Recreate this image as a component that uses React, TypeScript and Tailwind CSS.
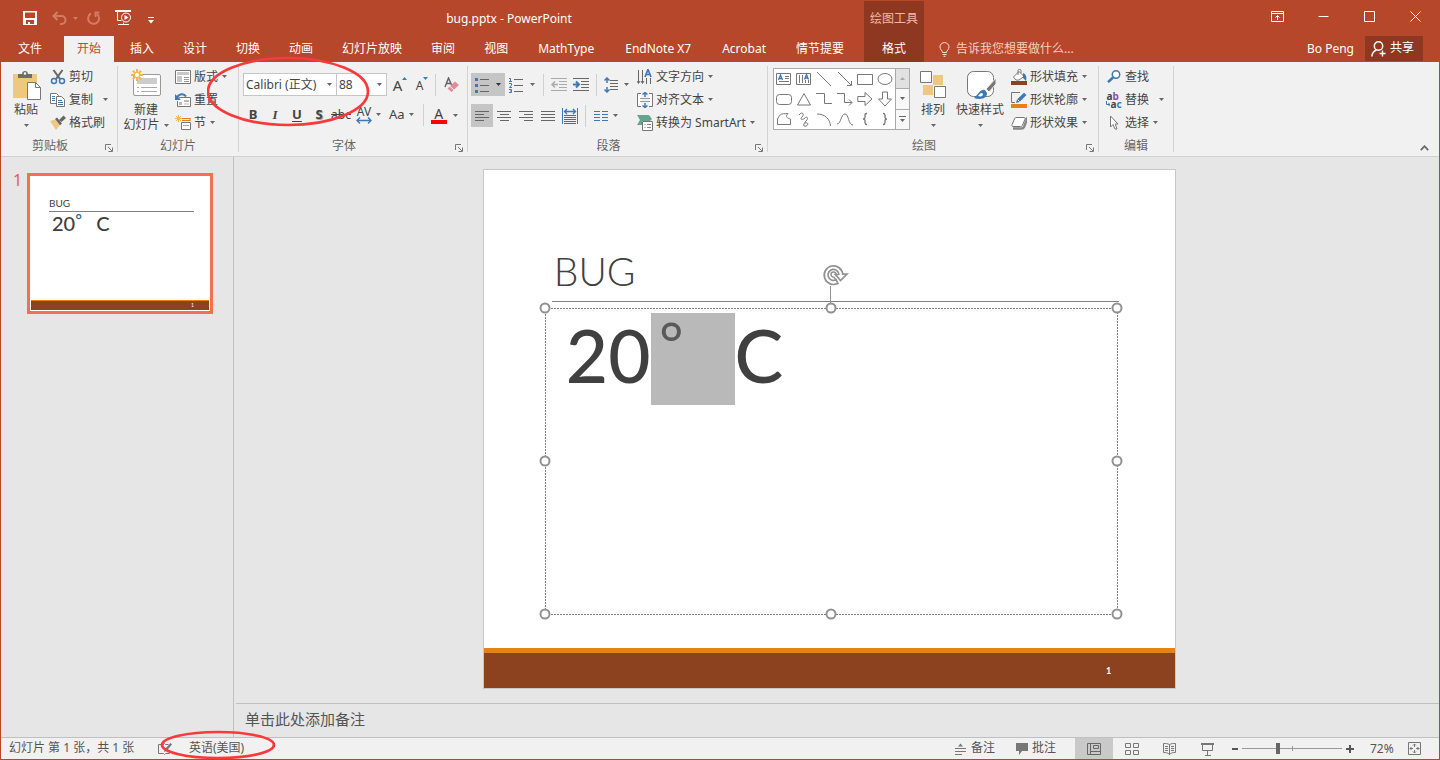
import React from "react";
import clsx from "clsx";

type IconProps = {
  w?: number;
  h?: number;
  className?: string;
  children: React.ReactNode;
};

function Icon({ w = 16, h = 16, className, children }: IconProps) {
  return (
    <svg
      width={w}
      height={h}
      viewBox={`0 0 ${w} ${h}`}
      fill="none"
      stroke="#777"
      strokeWidth={1}
      className={clsx("shrink-0", className)}
      aria-hidden="true"
    >
      {children}
    </svg>
  );
}

function Caret({ className = "text-[#666]" }: { className?: string }) {
  return (
    <svg width="5" height="3" viewBox="0 0 5 3" className={clsx("shrink-0", className)} aria-hidden="true">
      <path d="M0 0h5L2.500 3z" fill="currentColor" />
    </svg>
  );
}

/* ---------- title bar ---------- */

function QuickAccess() {
  return (
    <div className="flex items-center pl-[22px]">
      <button aria-label="保存" className="w-[30px]">
        <Icon w={16} h={16}>
          <path d="M1 1h14v14H1z" fill="#fff" stroke="none" />
          <path d="M3 2.500h10V8H3zM4 10h8v4H4z" fill="#b7472a" stroke="none" />
          <path d="M6 12h2v3H6z" fill="#fff" stroke="none" />
        </Icon>
      </button>
      <button aria-label="撤消" className="flex w-[34px] items-center gap-[6px] text-[#cf7d67]">
        <Icon w={15} h={14}>
          <path d="M5.500 1 1.500 5l4 4M2 5h7.500a4 4 0 0 1 0 8H8" stroke="#cf7d67" strokeWidth={2} />
        </Icon>
        <Caret className="text-[#cf7d67]" />
      </button>
      <button aria-label="恢复" className="w-[29px]">
        <Icon w={15} h={15}>
          <path d="M5 2.500a5.500 5.500 0 1 0 6 .5M13.500 1.500H9.500V6" stroke="#cf7d67" strokeWidth={2} />
        </Icon>
      </button>
      <button aria-label="从头开始" className="w-[33px]">
        <Icon w={18} h={16}>
          <path d="M2.500 2v8.500h4M3 14.500h11M8.500 12.500v2" stroke="#fff" />
          <path d="M0 1h16" stroke="#fff" strokeWidth={2} />
          <circle cx="11" cy="7.500" r="4.500" fill="#b7472a" stroke="#fff" />
          <path d="M9.500 5v5l4-2.500z" fill="#fff" stroke="none" />
        </Icon>
      </button>
      <button aria-label="自定义快速访问工具栏" className="pt-1">
        <Icon w={6} h={7}>
          <path d="M0 .5h6" stroke="#fff" />
          <path d="M0 3h6L3 6.500z" fill="#fff" stroke="none" />
        </Icon>
      </button>
    </div>
  );
}

const tabs = [
  { name: "插入" },
  { name: "设计" },
  { name: "切换" },
  { name: "动画" },
  { name: "幻灯片放映" },
  { name: "审阅" },
  { name: "视图" },
  { name: "MathType", addin: true },
  { name: "EndNote X7", addin: true },
  { name: "Acrobat", addin: true },
  { name: "情节提要" },
];

function WindowButton({ label, children }: { label: string; children: React.ReactNode }) {
  return (
    <button aria-label={label} className="flex h-full w-[46px] items-center justify-center">
      <Icon w={13} h={11}>
        <g stroke="#fff">{children}</g>
      </Icon>
    </button>
  );
}

function Header() {
  return (
    <header className="flex h-[62px] shrink-0 bg-[#b7472a] text-xs text-white">
      <div className="flex shrink-0 basis-3/5 flex-col">
        <div className="flex h-9 items-center">
          <QuickAccess />
          <h1 className="flex-1 pt-[2px] text-center">bug.pptx - PowerPoint</h1>
        </div>
        <nav className="flex flex-1 gap-[3px] whitespace-nowrap pl-[5px]">
          <button className="mr-[6px] px-[13px]">文件</button>
          <button className="bg-[#f1f1f1] px-[13px] text-[#c8472a]">开始</button>
          {tabs.map((tab) => (
            <button key={tab.name} className={tab.addin ? "px-[14px]" : "px-[13px]"}>
              {tab.name}
            </button>
          ))}
        </nav>
      </div>
      <div className="mt-px flex w-[60px] shrink-0 flex-col bg-[#8f3821]">
        <div className="flex h-[35px] items-center justify-center text-[#f2b8a4]">绘图工具</div>
        <button className="flex-1">格式</button>
      </div>
      <div className="flex min-w-0 flex-1 flex-col">
        <div className="flex h-[33px] justify-end pr-[2px]">
          <WindowButton label="功能区显示选项">
            <path d="M.5.5h12v10H.5zM.5 2.500h12M6.500 9V4.500M4.500 6.500l2-2 2 2" />
          </WindowButton>
          <WindowButton label="最小化">
            <path d="M1.500 5.500h10" />
          </WindowButton>
          <WindowButton label="最大化">
            <path d="M1.500.5h10v10h-10z" />
          </WindowButton>
          <WindowButton label="关闭">
            <path d="m1.500.5 10 10M11.500.5l-10 10" />
          </WindowButton>
        </div>
        <div className="mt-[3px] flex flex-1 items-center pl-[15px] pr-[17px]">
          <Icon w={11} h={15}>
            <path
              d="M3.500 10.500C3.500 8.500 1 7.500 1 4.900a4.500 4.300 0 0 1 9 0c0 2.600-2.500 3.600-2.500 5.600zM3.500 12.500h4M4.500 14.300h2"
              stroke="#fbe0d8"
            />
          </Icon>
          <input
            aria-label="告诉我您想要做什么"
            placeholder="告诉我您想要做什么..."
            className="ml-[6px] w-36 min-w-0 bg-transparent text-xs outline-none placeholder:text-[#f3cfc5]"
          />
          <span className="ml-auto mr-[11px] whitespace-nowrap">Bo Peng</span>
          <button className="mb-px flex h-[25px] w-[58px] shrink-0 items-center gap-1 bg-[#8f3821] pb-[2px] pl-[6px]">
            <Icon w={15} h={16} className="mt-[2px]">
              <g stroke="#fff" strokeWidth={1.400}>
                <circle cx="7.500" cy="5" r="4.200" />
                <path d="M.8 15.500c.3-3.500 2-5.500 4.700-6.500M8.500 12.500h6M11.500 9.500v6" />
              </g>
            </Icon>
            共享
          </button>
        </div>
      </div>
    </header>
  );
}

/* ---------- ribbon parts ---------- */

function Separator() {
  return <div className="my-1 w-px shrink-0 bg-[#d4d4d4]" />;
}

function Divider() {
  return <div className="h-[22px] w-px shrink-0 bg-[#d0d0d0]" />;
}

type GroupProps = {
  label: string;
  width: string;
  launcher?: boolean;
  children: React.ReactNode;
};

function Group({ label, width, launcher, children }: GroupProps) {
  return (
    <>
      <section aria-label={label} className={clsx("relative flex shrink-0 flex-col", width)}>
        <div className="flex h-[72px] pt-[3px]">{children}</div>
        <div className="flex h-[22px] items-center pt-[2px]">
          <span className="flex-1 text-center text-[#666]">{label}</span>
          {launcher && (
            <button aria-label={`${label}设置`} className="w-[18px] pl-[6px] pt-1">
              <Icon w={8} h={8}>
                <path d="M.5 6V.5H6M3 3l4 4M7.500 3.500v4h-4" />
              </Icon>
            </button>
          )}
        </div>
      </section>
      <Separator />
    </>
  );
}

type RowButtonProps = {
  icon: React.ReactNode;
  text: string;
  caret?: boolean;
  wide?: boolean;
};

function RowButton({ icon, text, caret, wide }: RowButtonProps) {
  return (
    <button className="flex h-[23px] items-center whitespace-nowrap">
      <span className="mr-[3px] flex w-4 justify-center">{icon}</span>
      {text}
      {caret && (
        <span className={wide ? "ml-[10px]" : "ml-1"}>
          <Caret />
        </span>
      )}
    </button>
  );
}

function TallButton({ icon, lines, className }: { icon: React.ReactNode; lines: string[]; className?: string }) {
  return (
    <button className={clsx("flex flex-col items-center whitespace-nowrap pt-1", className)}>
      <span className="flex h-8 items-center">{icon}</span>
      <span className="mt-px h-4 leading-4">{lines[0]}</span>
      <span className="flex h-[14px] items-center gap-1 leading-4">
        {lines[1]}
        <Caret />
      </span>
    </button>
  );
}

function ClipboardGroup() {
  return (
    <Group label="剪贴板" width="w-[116px]" launcher>
      <TallButton
        className="ml-[5px] w-10"
        lines={["粘贴"]}
        icon={
          <Icon w={29} h={31} className="ml-[3px]">
            <path d="M0 4h24v24H0z" fill="#edc87e" stroke="none" />
            <path d="M5 8V4h4c0-4 6-4 6 0h4v4z" fill="#6d6d6d" stroke="none" />
            <circle cx="12" cy="3.500" r="1.200" fill="#fff" stroke="none" />
            <path d="M14.500 12.500h8l5 5v12h-13z" fill="#fff" />
            <path d="M22.500 12.500v5h5" />
          </Icon>
        }
      />
      <div className="ml-1 flex flex-col">
        <RowButton
          text="剪切"
          icon={
            <Icon>
              <path d="M3.500 1 10 10M12.500 1 6 10" stroke="#666" strokeWidth={2} />
              <circle cx="4" cy="12" r="2.500" stroke="#3f78b5" strokeWidth={1.500} />
              <circle cx="12" cy="12" r="2.500" stroke="#3f78b5" strokeWidth={1.500} />
            </Icon>
          }
        />
        <RowButton
          text="复制"
          caret
          wide
          icon={
            <Icon>
              <path d="M.5 1.500h6l2 2v8h-8z" fill="#fff" />
              <path d="M6.500 4.500h5l3 3v7h-8z" fill="#fff" />
              <path d="M2 4.500h3M2 6.500h3M2 8.500h3M8 8.500h4M8 10.500h5M8 12.500h5" stroke="#3f78b5" />
            </Icon>
          }
        />
        <RowButton
          text="格式刷"
          icon={
            <Icon>
              <path d="m0 6 5-1.500L10 10l-4 5z" fill="#edc87e" stroke="none" />
              <path d="m5 4 2-1.500 5 6-2 1.800zM9 5l4.500-4.500L16 3l-4.500 4z" fill="#666" stroke="none" />
            </Icon>
          }
        />
      </div>
    </Group>
  );
}

function SlidesGroup() {
  return (
    <Group label="幻灯片" width="w-[120px]">
      <TallButton
        className="ml-[3px] w-[50px]"
        lines={["新建", "幻灯片"]}
        icon={
          <Icon w={32} h={30} className="-mt-1">
            <rect x="3.500" y="6.500" width="27" height="21" rx="1.500" fill="#fff" stroke="#999" />
            <path d="M7 10h20v6H7z" fill="#ccc" stroke="none" />
            <path d="M7 19.500h2M11 19.500h16M7 23.500h2M11 23.500h16" stroke="#aaa" />
            <path d="M7 1v12M1 7h12M2.800 2.800l8.400 8.400M11.200 2.800l-8.400 8.400" stroke="#eeb752" strokeWidth={2} />
            <circle cx="7" cy="7" r="2" fill="#fff" stroke="none" />
          </Icon>
        }
      />
      <div className="ml-1 flex flex-col">
        <RowButton
          text="版式"
          caret
          icon={
            <Icon>
              <path d="M.5 1.500h15v13H.5z" fill="#fff" />
              <path d="M2 3h12v3H2zM2 7h5v6H2z" fill="#c8c8c8" stroke="none" />
              <path d="M9 8.500h5M9 10.500h5M9 12.500h5" stroke="#999" />
            </Icon>
          }
        />
        <RowButton
          text="重置"
          icon={
            <Icon>
              <path d="M4 5.500h11.500v9H2.500V9" fill="#fff" />
              <path d="M9 8h5v2H9zM4 10h3v3H4zM9 11.500h5v1H9z" fill="#bbb" stroke="none" />
              <path d="M2 5.500c2-4 7-4.500 9-1" stroke="#3f78b5" strokeWidth={2} />
              <path d="M0 2v6h6z" fill="#3f78b5" stroke="none" />
            </Icon>
          }
        />
        <RowButton
          text="节"
          caret
          icon={
            <Icon>
              <path d="M6.500 7.500h9v7h-9z" fill="#fff" />
              <path d="M8 10.500h6" stroke="#aaa" />
              <path d="M7 3.500h8.500M7 5.500h8.500M15 3v3" stroke="#e0801b" />
              <path d="M3.500 0v7M0 3.500h7M1 1l5 5M6 1 1 6" stroke="#eeb752" />
            </Icon>
          }
        />
      </div>
    </Group>
  );
}

function Combo({ label, value, className }: { label: string; value: string; className: string }) {
  return (
    <div className={clsx("relative h-[23px]", className)}>
      <select
        aria-label={label}
        className="h-full w-full appearance-none rounded-none border border-[#c6c6c6] bg-white pl-[2px] text-xs outline-none"
      >
        <option>{value}</option>
      </select>
      <span className="pointer-events-none absolute inset-y-0 right-[5px] flex items-center">
        <Caret />
      </span>
    </div>
  );
}

function FontGroup() {
  const cell = "flex h-full w-[22px] items-center justify-center";
  return (
    <Group label="字体" width="w-[228px]" launcher>
      <div className="flex flex-col gap-2 pl-1 pt-2">
        <div className="flex h-[23px] items-center">
          <Combo label="字体" value="Calibri (正文)" className="w-[94px]" />
          <Combo label="字号" value="88" className="-ml-px w-[51px]" />
          <button aria-label="增大字号" className={clsx(cell, "ml-[2px]")}>
            <span className="text-[15px] leading-4">A</span>
            <svg width="5" height="3" viewBox="0 0 5 3" className="mb-[13px]">
              <path d="M0 3h5L2.500 0z" fill="#3f78b5" />
            </svg>
          </button>
          <button aria-label="减小字号" className={cell}>
            <span className="pt-[2px] text-xs leading-4">A</span>
            <Caret className="mb-[13px] text-[#3f78b5]" />
          </button>
          <span className="ml-[2px] mr-[5px]">
            <Divider />
          </span>
          <button aria-label="清除格式" className={cell}>
            <Icon w={16} h={16}>
              <path d="m1 10 3.500-9L8 9M2.500 6.500h4" stroke="#666" strokeWidth={1.500} />
              <path d="m3.500 11.500 7.500-7 4 3.500-7.500 7z" fill="#e8899a" stroke="none" />
              <path d="m5.500 9 4.500 4" stroke="#fff" />
            </Icon>
          </button>
        </div>
        <div className="-ml-px flex h-[23px] items-center pb-[2px] text-[13px]">
          <button aria-label="加粗" className={clsx(cell, "font-bold")}>
            B
          </button>
          <button aria-label="倾斜" className={clsx(cell, "font-['Liberation_Serif',serif] font-bold italic")}>
            I
          </button>
          <button aria-label="下划线" className={clsx(cell, "font-bold underline underline-offset-2")}>
            U
          </button>
          <button aria-label="文字阴影" className={clsx(cell, "font-bold [text-shadow:1px_1px_1px_#999]")}>
            S
          </button>
          <button aria-label="删除线" className={clsx(cell, "text-xs line-through")}>
            abc
          </button>
          <button aria-label="字符间距" className="ml-1 flex items-center gap-1">
            <span className="flex flex-col items-center">
              <span className="text-xs leading-[11px]">AV</span>
              <Icon w={16} h={7}>
                <path d="M1 3.500h14M4 .5l-3 3 3 3M12 .5l3 3-3 3" stroke="#3f78b5" strokeWidth={1.400} />
              </Icon>
            </span>
            <Caret />
          </button>
          <button aria-label="更改大小写" className="ml-2 mr-[9px] flex items-center gap-1">
            Aa
            <Caret />
          </button>
          <Divider />
          <button aria-label="字体颜色" className="ml-[7px] mt-[2px] flex items-center gap-[6px]">
            <span className="flex w-4 flex-col items-center border-b-4 border-[#f00]">
              <span className="text-sm leading-[13px]">A</span>
            </span>
            <Caret />
          </button>
        </div>
      </div>
      <svg
        width="164"
        height="72"
        viewBox="0 0 164 72"
        className="pointer-events-none absolute -left-8 -top-[7px] z-10"
        aria-hidden="true"
      >
        <ellipse cx="81" cy="36.500" rx="80" ry="33.500" fill="none" stroke="#fa393b" strokeWidth="2.700" />
      </svg>
    </Group>
  );
}

function Align({ d, label, active }: { d: string; label: string; active?: boolean }) {
  return (
    <button
      aria-label={label}
      className={clsx("flex h-full w-[22px] items-center justify-center", active && "bg-[#c5c5c5]")}
    >
      <Icon w={14} h={12}>
        <path d={d} stroke="#666" />
      </Icon>
    </button>
  );
}

function ParagraphGroup() {
  return (
    <Group label="段落" width="w-[299px]" launcher>
      <div className="flex w-[166px] flex-col gap-2 pl-[3px] pt-2">
        <div className="flex h-[23px] items-center">
          <button aria-label="项目符号" className="flex h-full w-[34px] items-center gap-[7px] bg-[#c5c5c5] pl-1">
            <Icon w={14} h={16}>
              <path d="M5 2.500h9M5 8.500h9M5 14.500h9" stroke="#666" />
              <path d="M0 1h3v3H0zM0 7h3v3H0zM0 13h3v3H0z" fill="#3f78b5" stroke="none" />
            </Icon>
            <Caret className="text-[#333]" />
          </button>
          <button aria-label="编号" className="ml-1 flex items-center gap-[7px]">
            <Icon w={14} h={16}>
              <path d="M5 2.500h9M5 8.500h9M5 14.500h9" stroke="#666" />
              <path d="M0 1.500h1.500v3M0 4.500h3M0 6.500h2.500v1.500L.5 10.500h2.500M0 12.500h2.500v3H0M1 14h1.500" stroke="#3f78b5" />
            </Icon>
            <Caret />
          </button>
          <span className="ml-2 mr-[7px]">
            <Divider />
          </span>
          <button aria-label="降低列表级别" className="mr-[6px]">
            <Icon w={16} h={13}>
              <path d="M0 .5h16M8 3.500h8M8 6.500h8M8 9.500h8M0 12.500h16" stroke="#aaa" />
              <path d="M7 6.500H1M4 3.500l-3 3 3 3" stroke="#aaa" strokeWidth={1.500} />
            </Icon>
          </button>
          <button aria-label="提高列表级别" className="mr-[7px]">
            <Icon w={16} h={13}>
              <path d="M0 .5h16M8 3.500h8M8 6.500h8M8 9.500h8M0 12.500h16" stroke="#666" />
              <path d="M0 6.500h6M3 3.500l3 3-3 3" stroke="#3f78b5" strokeWidth={2} />
            </Icon>
          </button>
          <Divider />
          <button aria-label="行距" className="ml-[7px] flex items-center gap-[5px]">
            <Icon w={15} h={16}>
              <path d="M6 3.500h8M6 6.500h8M6 9.500h8M6 12.500h8" stroke="#666" />
              <path d="M3 1v5M3 10v5M.5 3.500 3 1l2.500 2.500M.5 12.500 3 15l2.500-2.500" stroke="#3f78b5" strokeWidth={1.500} />
            </Icon>
            <Caret />
          </button>
        </div>
        <div className="flex h-[23px] items-center">
          <Align label="左对齐" active d="M0 1.500h14M0 4.500h9M0 7.500h14M0 10.500h9" />
          <Align label="居中" d="M0 1.500h14M3 4.500h9M0 7.500h14M3 10.500h9" />
          <Align label="右对齐" d="M0 1.500h14M5 4.500h9M0 7.500h14M5 10.500h9" />
          <Align label="两端对齐" d="M0 1.500h14M0 4.500h14M0 7.500h14M0 10.500h14" />
          <button aria-label="分散对齐" className="flex w-[22px] justify-center">
            <Icon w={16} h={16}>
              <path d="M.5 0v16M15.500 0v16" stroke="#3f78b5" />
              <path d="M2.500 3.500h11M5 1 2.500 3.500 5 6M11 1l2.500 2.500L11 6" stroke="#3f78b5" strokeWidth={1.400} />
              <path d="M2 7.500h12M2 9.500h12M2 11.500h12M2 13.500h12M2 15.500h12" stroke="#666" />
            </Icon>
          </button>
          <span className="ml-1 mr-2">
            <Divider />
          </span>
          <button aria-label="分栏" className="flex items-center gap-[5px]">
            <Icon w={14} h={11}>
              <path d="M0 1.500h6M8 1.500h6M0 4.500h6M8 4.500h6M0 7.500h6M8 7.500h6M0 10.500h6M8 10.500h6" stroke="#3f78b5" />
            </Icon>
            <Caret />
          </button>
        </div>
      </div>
      <div className="ml-[3px] flex flex-col">
        <RowButton
          text="文字方向"
          caret
          icon={
            <Icon>
              <path d="M1.500 1v13M5.500 1v13M9.500 9v6M13.500 9v6M0 12l1.500 2.500L3 12M4 12l1.500 2.500L7 12" stroke="#666" />
              <path d="m8 8 3-7.500L14 8M9 5.500h4" stroke="#3f78b5" strokeWidth={1.700} />
            </Icon>
          }
        />
        <RowButton
          text="对齐文本"
          caret
          icon={
            <Icon>
              <path d="M4 1.500H.5v13H4M12 1.500h3.500v13H12" fill="#fff" />
              <path d="M3 6.500h10M3 9.500h10" stroke="#999" />
              <path d="M8 0v5M5.500 2.500 8 .5l2.500 2M8 16v-5M5.500 13.500 8 15.500l2.500-2" stroke="#3f78b5" strokeWidth={1.500} />
            </Icon>
          }
        />
        <RowButton
          text="转换为 SmartArt"
          caret
          icon={
            <Icon>
              <path d="M0 0h12l3 4-2 2H5v4H0l3-5z" fill="#66a48f" stroke="none" />
              <path d="M5.500 6.500h10v9h-10z" fill="#fff" />
              <path d="M7.500 9.500h1M10 9.500h4M7.500 12.500h1M10 12.500h4" stroke="#888" />
            </Icon>
          }
        />
      </div>
    </Group>
  );
}

const shapes: React.ReactNode[] = [
  <>
    <path d="M.5 2.500h14v11H.5zM9 5.500h4M9 7.500h4M3 10.500h10" />
    <path d="m2.500 9 2-5 2 5M3 7.500h3" stroke="#3f78b5" strokeWidth={1.300} />
  </>,
  <>
    <path d="M.5 2.500h14v11H.5zM3.500 4v8M6.500 4v8M9.500 9v3M12.500 9v3" />
    <path d="m8.500 8.500 2-5 2 5M9 7h3" stroke="#3f78b5" strokeWidth={1.300} />
  </>,
  <path d="m1 1 14 14" />,
  <path d="m1 1 13 13M14.500 10v4.500H10" />,
  <path d="M.5 3.500h15v10H.5z" />,
  <ellipse cx="8" cy="8" rx="7" ry="5.500" />,
  <rect x=".5" y="3.500" width="15" height="10" rx="3" />,
  <path d="M8 2.500 14.500 14h-13z" />,
  <path d="M0 2.500h8.500v10H16" />,
  <path d="M0 2.500h7.500v9H15M12 8.500l3 3-3 3" />,
  <path d="M.8 5.500H8v-4l7 6.500-7 6.500v-4H.8z" />,
  <path d="M5.500 1v7h-4L8 15l6.500-7h-4V1z" />,
  <path d="M3.500 4.500C6 2 9 3 12 2.500c-3 3.500-1 4.500 2.500 5.500v5.500H1.500V8z" />,
  <path d="M3 4c3-4 6-1 3 2s1 3 3 1 4 0 1 3-3 6 0 5 2-4-1-3" />,
  <path d="M1 3c8 0 13 5 13.500 12" />,
  <path d="M0 13c4 0 4-10 8-10s3 11 8 11" />,
  <path d="M10 2.500H9.500C8 2.500 8 3.500 8 4.500v2C8 7.500 7.500 8 6 8c1.500 0 2 .5 2 1.500v2c0 1 0 2 1.500 2h.5" strokeWidth={1.300} />,
  <path d="M6 2.500h.5C8 2.500 8 3.500 8 4.500v2C8 7.500 8.500 8 10 8c-1.500 0-2 .5-2 1.500v2c0 1 0 2-1.500 2H6" strokeWidth={1.300} />,
];

function DrawingGroup() {
  return (
    <Group label="绘图" width="w-[330px]" launcher>
      <div className="ml-[5px] mt-[3px] flex h-[62px] w-[137px] border border-[#ababab] bg-white">
        <div className="grid flex-1 grid-cols-6 content-start">
          {shapes.map((shape, i) => (
            <button key={i} aria-label={`形状 ${i + 1}`} className="flex h-5 items-center justify-center">
              <Icon>{shape}</Icon>
            </button>
          ))}
        </div>
        <div className="flex w-[14px] flex-col divide-y divide-[#ababab] border-l border-[#ababab] bg-[#f8f8f8]">
          <button aria-label="上一行" className="flex flex-1 items-center justify-center bg-[#e1e1e1]">
            <Caret className="rotate-180 text-[#aaa]" />
          </button>
          <button aria-label="下一行" className="flex flex-1 items-center justify-center">
            <Caret />
          </button>
          <button aria-label="其他" className="flex flex-1 flex-col items-center justify-center gap-[2px]">
            <span className="h-px w-[7px] bg-[#666]" />
            <Caret />
          </button>
        </div>
      </div>
      <TallButton
        className="ml-1 w-[38px]"
        lines={["排列"]}
        icon={
          <Icon w={28} h={28}>
            <path d="M14 4h10v10H14zM4 14h10v10H4z" fill="#edc87e" stroke="none" />
            <path d="M1.500.5h11v11h-11zM15.500 15.500h11v11h-11z" fill="#fff" />
          </Icon>
        }
      />
      <TallButton
        className="ml-[2px] w-[52px]"
        lines={["快速样式"]}
        icon={
          <Icon w={30} h={30} className="ml-1">
            <rect x=".5" y="1.500" width="26" height="25" rx="6" fill="#fff" />
            <path d="M29 8v6l-7 8-3-3z" fill="#777" stroke="#f1f1f1" />
            <path d="M18 20c-5-1-6 4-11 8 6 2 13 1 13-5z" fill="#3f78b5" stroke="none" />
            <path d="M15 23c-2 0-3 2-4 3 3 1 5 0 5-2z" fill="#fff" stroke="none" />
          </Icon>
        }
      />
      <div className="ml-[5px] flex flex-col">
        <RowButton
          text="形状填充"
          caret
          icon={
            <Icon>
              <path d="M0 12h16v4H0z" fill="#8c411f" stroke="none" />
              <path d="M2.500 8 8 2.500l5 5L8 11H5z" fill="#fff" />
              <path d="M7 6V1.500c0-1.500 3-1.500 3 0V4" />
              <path d="M12 4c3 1 4 4 3 8l-3-3z" fill="#3f78b5" stroke="none" />
            </Icon>
          }
        />
        <RowButton
          text="形状轮廓"
          caret
          icon={
            <Icon>
              <path d="M0 12h16v4H0z" fill="#e48312" stroke="none" />
              <path d="M9 .5H.5v10H4" />
              <path d="M5 11 6 7.500 13 .8 15.500 3 8.500 10z" fill="#3f78b5" stroke="none" />
              <path d="m6.500 7.500 2 2" stroke="#fff" />
            </Icon>
          }
        />
        <RowButton
          text="形状效果"
          caret
          icon={
            <Icon>
              <path d="M2 13.500h8.500c1.500 0 2-.5 2.500-1.500l2.500-6.500c.5-1.500 0-2-1-2.500" stroke="#888" strokeWidth={2.500} />
              <path d="M5 2.500h8c1 0 1.300 1 1 1.700L11.500 10c-.4 1-1 1.500-2 1.500H2c-1 0-1.300-1-1-2l2.500-5.500c.3-1 .8-1.500 1.500-1.500z" fill="#fff" />
            </Icon>
          }
        />
      </div>
    </Group>
  );
}

function EditingGroup() {
  return (
    <Group label="编辑" width="w-[74px]">
      <div className="ml-[7px] flex flex-col">
        <RowButton
          text="查找"
          icon={
            <Icon w={14} h={13}>
              <circle cx="9" cy="4.500" r="3.700" fill="#fff" stroke="#3f78b5" strokeWidth={1.500} />
              <path d="m6 7.500-5 4.700" stroke="#3f78b5" strokeWidth={2.500} />
            </Icon>
          }
        />
        <RowButton
          text="替换"
          caret
          wide
          icon={
            <span className="flex flex-col text-left text-[10px] font-bold leading-[8px]">
              <span>
                a<span className="text-[#8d4fb5]">b</span>
              </span>
              <span className="flex items-center">
                <Icon w={4} h={6}>
                  <path d="M.5 0v3.500H4M2.500 2 4 3.500 2.500 5" stroke="#3f78b5" />
                </Icon>
                a<span className="text-[#3f78b5]">c</span>
              </span>
            </span>
          }
        />
        <RowButton
          text="选择"
          caret
          icon={
            <Icon w={10} h={15}>
              <path d="M1.500 1v11l2.500-2.500 2 4.500h2L6.200 9H9z" fill="#fff" />
            </Icon>
          }
        />
      </div>
    </Group>
  );
}

function Ribbon() {
  return (
    <div className="flex shrink-0 border-b border-[#d2d2d2] bg-[#f1f1f1] text-xs text-[#444]">
      <ClipboardGroup />
      <SlidesGroup />
      <FontGroup />
      <ParagraphGroup />
      <DrawingGroup />
      <EditingGroup />
      <button aria-label="折叠功能区" className="mb-[5px] ml-auto mr-[10px] self-end">
        <Icon w={9} h={6}>
          <path d="m.8 5.200 3.700-4 3.700 4" stroke="#666" strokeWidth={1.700} />
        </Icon>
      </button>
    </div>
  );
}

/* ---------- workspace ---------- */

function Thumbnails() {
  return (
    <aside className="flex w-[233px] shrink-0 items-start border-r border-[#c0c0c0] pl-3 pt-4">
      <span className="w-[14px] text-base leading-[14px] text-[#dd6547]">1</span>
      <button
        aria-label="幻灯片 1"
        className="flex h-[141px] w-[186px] flex-col border-[3px] border-[#f2714f] bg-white p-px text-left font-['Lato',sans-serif] text-[#404040]"
      >
        <span className="ml-[18px] mr-[15px] mt-[18px] block border-b border-[#808080] text-[10px] leading-4">
          BUG
        </span>
        <span className="ml-[21px] flex flex-1 text-xl font-medium leading-[22px]">
          20
          <span className="w-[21px] font-['Noto_Sans',sans-serif] text-base leading-4 text-[#2f6090]">°</span>
          C
        </span>
        <span className="flex h-[10px] items-center justify-end border-t border-[#e48312] bg-[#8c411f] pr-[15px] text-[5px] text-white">
          1
        </span>
      </button>
    </aside>
  );
}

const handles = [
  "left-0 top-0",
  "left-1/2 top-0",
  "left-full top-0",
  "left-0 top-1/2",
  "left-full top-1/2",
  "left-0 top-full",
  "left-1/2 top-full",
  "left-full top-full",
];

function Slide() {
  return (
    <article className="flex aspect-[4/3] h-full flex-col border border-[#c8c8c8] bg-white font-['Lato',sans-serif] text-[#404040]">
      <div className="flex min-h-0 flex-1 flex-col pb-[34px] pl-[61px] pr-[58px]">
        <h2 className="-mr-[2px] ml-[7px] border-b border-[#808080] pb-[5px] pl-[2px] pt-[77px] text-[39px] font-light leading-[49px]">
          BUG
        </h2>
        <div className="relative mt-[6px] flex-1">
          <svg className="absolute inset-0 size-full overflow-visible" aria-hidden="true">
            <rect
              width="100%"
              height="100%"
              fill="none"
              stroke="#808080"
              strokeDasharray="2 1"
              shapeRendering="crispEdges"
            />
          </svg>
          <p className="relative flex h-[97px] pl-[21px] pt-[5px] text-[73px] font-medium leading-[84px]">
            20
            <span className="w-[84px] bg-[#b9b9b9] pl-2 font-['Noto_Sans',sans-serif] text-[60px] font-normal leading-[60px] text-[#595959]">
              °
            </span>
            C
          </p>
          <svg
            width="28"
            height="40"
            viewBox="0 0 28 40"
            fill="none"
            stroke="#919191"
            className="absolute -top-11 left-1/2 -ml-[10px]"
            aria-hidden="true"
          >
            <path d="M9.500 22v18" />
            <path d="M21.800 11A9.300 9.300 0 1 0 17 19.300l-2-3.500A5.500 5.500 0 1 1 18 11" strokeWidth={1.700} />
            <path d="M17.500 10.500h-3l5 6 6.500-6.500h-4.300" strokeWidth={1.700} />
            <path d="M15 10.500A2.500 2.500 0 1 0 12.500 13l3 3" strokeWidth={1.500} />
          </svg>
          {handles.map((place) => (
            <span
              key={place}
              className={clsx(
                "absolute size-[11px] -translate-x-1/2 -translate-y-1/2 rounded-full border-2 border-[#919191] bg-white",
                place,
              )}
            />
          ))}
        </div>
      </div>
      <footer className="flex h-10 shrink-0 items-center justify-end border-t-[5px] border-[#e48312] bg-[#8c411f] pr-16 text-[9px] font-bold text-white">
        1
      </footer>
    </article>
  );
}

/* ---------- status bar ---------- */

function ViewButton({ label, active, children }: { label: string; active?: boolean; children: React.ReactNode }) {
  return (
    <button
      aria-label={label}
      className={clsx("flex h-full w-[38px] items-center justify-center", active && "bg-[#c9c9c9]")}
    >
      <Icon w={15} h={14}>
        {children}
      </Icon>
    </button>
  );
}

function StatusBar() {
  return (
    <footer className="relative flex h-[22px] shrink-0 items-center whitespace-nowrap border-t border-[#c0c0c0] bg-[#f1f1f1] text-xs text-[#555]">
      <span className="w-[156px] pb-px pl-2">幻灯片 第 1 张，共 1 张</span>
      <button aria-label="拼写检查">
        <Icon w={16} h={14}>
          <path d="M6.500 2.500h-5v9h5M6.500 2.500l1-1 1 1h3M6.500 11.500l1 1 1-1h4V8" />
          <path d="m7 10 1-3 5.500-6L15 2.500 9.500 9z" fill="#777" stroke="none" />
        </Icon>
      </button>
      <button className="ml-4 pb-[2px]">英语(美国)</button>
      <svg
        width="116"
        height="30"
        viewBox="0 0 116 30"
        className="pointer-events-none absolute -top-[8px] left-[159px]"
        aria-hidden="true"
      >
        <ellipse cx="58" cy="15" rx="56" ry="13" fill="none" stroke="#fa393b" strokeWidth="2.700" />
      </svg>
      <div className="ml-auto flex h-full items-center">
        <button className="mr-[21px] flex items-center gap-[5px] pb-[2px]">
          <Icon w={11} h={12} className="mt-[2px]">
            <path d="M0 5.500h11M0 8.500h11M0 11.500h7" />
            <path d="M3 3.500h5L5.500.5z" fill="#777" stroke="none" />
          </Icon>
          备注
        </button>
        <button className="mr-[19px] flex items-center gap-1 pb-[2px]">
          <Icon w={12} h={12} className="mt-[2px]">
            <path d="M0 0h12v8H6l-3 4V8H0z" fill="#777" stroke="none" />
          </Icon>
          批注
        </button>
        <ViewButton label="普通视图" active>
          <path d="M.5 1.500h13v11H.5zM3.500 1.500v11M3.500 9.500h10M6.500 3.500h5v3h-5z" stroke="#666" />
        </ViewButton>
        <ViewButton label="幻灯片浏览">
          <path d="M.5 1.500h5v4h-5zM8.500 1.500h5v4h-5zM.5 8.500h5v4h-5zM8.500 8.500h5v4h-5z" />
        </ViewButton>
        <ViewButton label="阅读视图">
          <path d="M6.500 2.500c-2-1-3.500-1-6-1v9c2.500 0 4 0 6 2 2-2 3.500-2 6-2v-9c-2.500 0-4 0-6 1v10M2 4.500h3M2 6.500h3M2 8.500h3M8 4.500h3M8 6.500h3M8 8.500h3" />
        </ViewButton>
        <ViewButton label="幻灯片放映">
          <path d="M0 2h13" strokeWidth={2} />
          <path d="M1.500 3v5.500h10V3M6.500 9v4M4 13.500h6" />
        </ViewButton>
        <button aria-label="缩小" className="ml-[5px] mr-1">
          <Icon w={6} h={6}>
            <path d="M0 3h6" stroke="#555" strokeWidth={2} />
          </Icon>
        </button>
        <div className="relative flex w-[100px] items-center">
          <span className="absolute left-1/2 h-[5px] w-px bg-[#999]" />
          <input
            type="range"
            aria-label="缩放"
            min={10}
            max={190}
            defaultValue={74}
            className="relative h-[10px] w-full appearance-none bg-transparent [&::-webkit-slider-runnable-track]:h-px [&::-webkit-slider-runnable-track]:bg-[#999] [&::-webkit-slider-thumb]:-mt-[5px] [&::-webkit-slider-thumb]:h-[11px] [&::-webkit-slider-thumb]:w-1 [&::-webkit-slider-thumb]:appearance-none [&::-webkit-slider-thumb]:bg-[#666]"
          />
        </div>
        <button aria-label="放大" className="ml-1">
          <Icon w={8} h={8}>
            <path d="M0 4h8M4 0v8" stroke="#555" strokeWidth={2} />
          </Icon>
        </button>
        <button className="ml-4 w-[38px] text-left">72%</button>
        <button aria-label="使幻灯片适应当前窗口" className="mr-[18px]">
          <Icon w={13} h={13}>
            <path d="M.5.5h12v12H.5zM6.500 2v3M6.500 8v3M2 6.500h3M8 6.500h3M5 3.500l1.500-1.500L8 3.500M5 9.500 6.500 11 8 9.500M3.500 5 2 6.500 3.500 8M9.500 5 11 6.500 9.500 8" />
          </Icon>
        </button>
      </div>
    </footer>
  );
}

export default function App() {
  return (
    <div className="flex h-screen min-h-[560px] flex-col overflow-hidden bg-[#e6e6e6] font-['Noto_Sans','Noto_Sans_CJK_SC',sans-serif]">
      <Header />
      <div className="flex min-h-0 flex-1 flex-col border-x border-b border-[#b7472a]">
        <Ribbon />
        <main className="flex min-h-0 flex-1">
          <Thumbnails />
          <div className="ml-[2px] flex min-w-0 flex-1 flex-col">
            <div className="flex min-h-0 flex-1 justify-center pb-[14px] pr-4 pt-3">
              <Slide />
            </div>
            <textarea
              aria-label="备注"
              placeholder="单击此处添加备注"
              className="block h-[34px] shrink-0 resize-none overflow-hidden border-t border-[#c0c0c0] bg-transparent pl-[9px] pt-[3px] text-[15px] leading-6 outline-none placeholder:text-[#555]"
            />
          </div>
        </main>
        <StatusBar />
      </div>
    </div>
  );
}
